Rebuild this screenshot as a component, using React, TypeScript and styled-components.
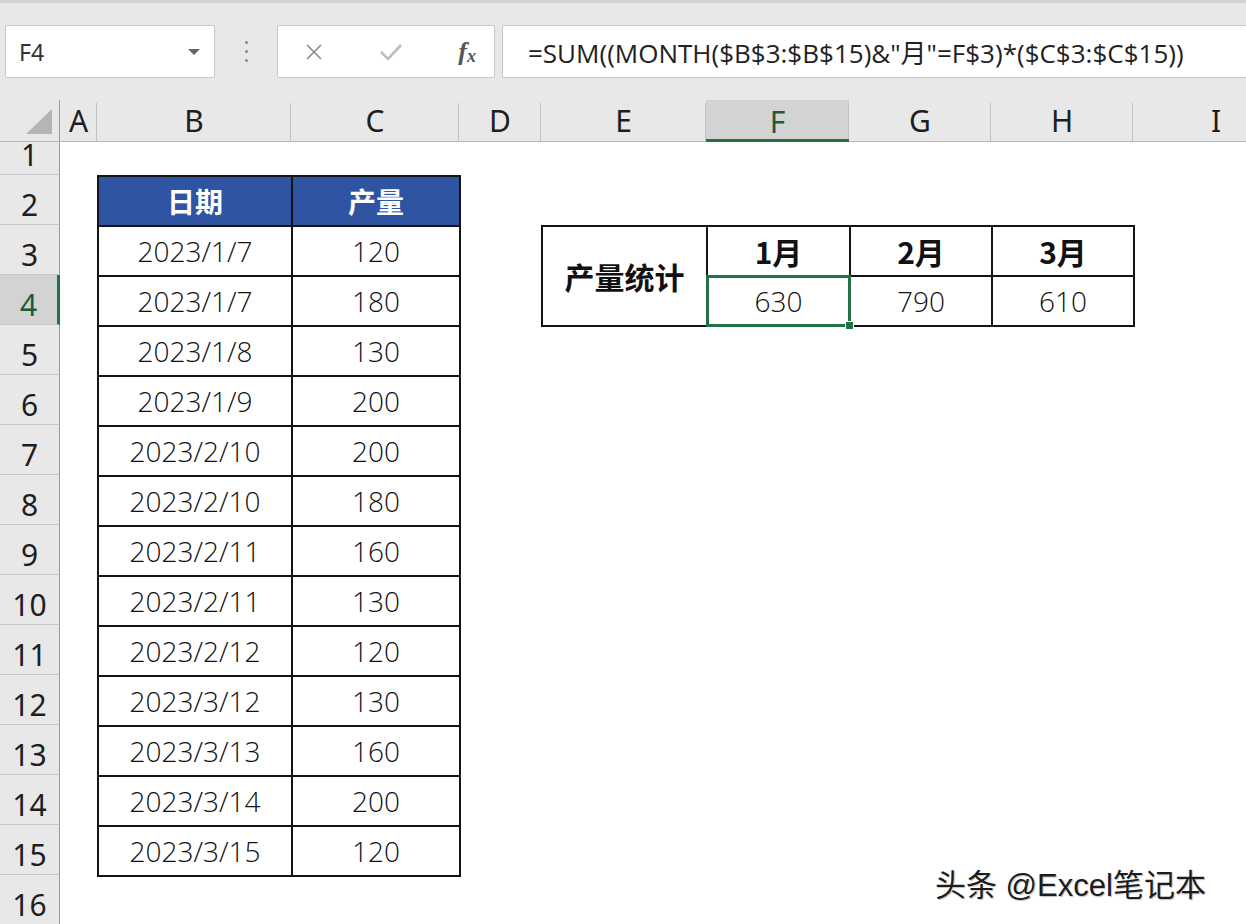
import React from 'react'
import styled, { createGlobalStyle } from 'styled-components'

const GlobalStyle = createGlobalStyle`
  html, body { margin: 0; padding: 0; background: #fff; }
  body {
    width: 1246px;
    height: 924px;
    overflow: hidden;
    font-family: "Noto Sans", "Noto Sans CJK SC", sans-serif;
    color: #222;
  }
`

const GREEN = '#217346'
const colWidths = [60, 37, 194, 168, 82, 165, 143, 142, 142, 166]
const colNames = ['A', 'B', 'C', 'D', 'E', 'F', 'G', 'H', 'I']

const records: [string, number][] = [
  ['2023/1/7', 120],
  ['2023/1/7', 180],
  ['2023/1/8', 130],
  ['2023/1/9', 200],
  ['2023/2/10', 200],
  ['2023/2/10', 180],
  ['2023/2/11', 160],
  ['2023/2/11', 130],
  ['2023/2/12', 120],
  ['2023/3/12', 130],
  ['2023/3/13', 160],
  ['2023/3/14', 200],
  ['2023/3/15', 120],
]

const App: React.FC = () => {
  return (
    <Page>
      <GlobalStyle />
      <Toolbar>
        <NameBox>
          <span>F4</span>
          <DropArrow />
        </NameBox>
        <Dots>
          <i /><i /><i />
        </Dots>
        <ButtonBox>
          <ToolIcon $tone="#8a8a8a">
            <svg width="20" height="20" viewBox="0 0 20 20">
              <path d="M3 3 L17 17 M17 3 L3 17" stroke="currentColor" strokeWidth="1.6" />
            </svg>
          </ToolIcon>
          <ToolIcon $tone="#bdbdbd">
            <svg width="24" height="20" viewBox="0 0 24 20">
              <path d="M2 10 L9 17 L22 3" stroke="currentColor" strokeWidth="2.6" fill="none" />
            </svg>
          </ToolIcon>
          <Fx>f<sub>x</sub></Fx>
        </ButtonBox>
        <FormulaBox>=SUM((MONTH($B$3:$B$15)&amp;"月"=F$3)*($C$3:$C$15))</FormulaBox>
      </Toolbar>

      <Sheet>
        <Corner>
          <svg width="26" height="25" viewBox="0 0 26 25">
            <polygon points="26,0 26,25 0,25" fill="#b5b5b5" />
          </svg>
        </Corner>
        {colNames.map((c, i) => (
          <ColHeader key={c} $selected={c === 'F'} style={{ gridColumn: i + 2 }}>
            {c}
          </ColHeader>
        ))}
        {Array.from({ length: 16 }, (_, i) => (
          <RowHeader key={i} $selected={i + 1 === 4} style={{ gridRow: i + 2 }}>
            {i + 1}
          </RowHeader>
        ))}

        <DataArea style={{ gridColumn: '3 / 5', gridRow: '3 / 17' }}>
          <Table>
            <colgroup>
              <col style={{ width: 194 }} />
              <col style={{ width: 168 }} />
            </colgroup>
            <thead>
              <tr>
                <HeadCell>日期</HeadCell>
                <HeadCell>产量</HeadCell>
              </tr>
            </thead>
            <tbody>
              {records.map(([d, v], i) => (
                <tr key={i}>
                  <Cell>{d}</Cell>
                  <Cell>{v}</Cell>
                </tr>
              ))}
            </tbody>
          </Table>
        </DataArea>

        <DataArea style={{ gridColumn: '6 / 10', gridRow: '4 / 6' }}>
          <Table>
            <colgroup>
              <col style={{ width: 165 }} />
              <col style={{ width: 143 }} />
              <col style={{ width: 142 }} />
              <col style={{ width: 142 }} />
            </colgroup>
            <tbody>
              <tr>
                <Cell rowSpan={2} $bold>产量统计</Cell>
                <Cell $bold>1月</Cell>
                <Cell $bold>2月</Cell>
                <Cell $bold>3月</Cell>
              </tr>
              <tr>
                <Cell>
                  630
                  <Selection><Handle /></Selection>
                </Cell>
                <Cell>790</Cell>
                <Cell>610</Cell>
              </tr>
            </tbody>
          </Table>
        </DataArea>

        <Watermark>头条 @Excel笔记本</Watermark>
      </Sheet>
    </Page>
  )
}
export default App

const Page = styled.div`
  width: 1246px;
  height: 924px;
  overflow: hidden;
  background: #fff;
`

const Toolbar = styled.div`
  height: 100px;
  box-sizing: border-box;
  background: #e8e8e8;
  border-top: 3px solid #d4d4d4;
  padding: 22px 0 0 5px;
  display: flex;
  align-items: flex-start;
`

const Box = styled.div`
  height: 53px;
  box-sizing: border-box;
  background: #fff;
  border: 1px solid #c8c8c8;
  border-radius: 2px;
  display: flex;
  align-items: center;
`

const NameBox = styled(Box)`
  width: 210px;
  padding: 0 14px 0 13px;
  justify-content: space-between;
  font-size: 23px;
  color: #333;
`

const DropArrow = styled.span`
  width: 0;
  height: 0;
  border-left: 6px solid transparent;
  border-right: 6px solid transparent;
  border-top: 6px solid #666;
`

const Dots = styled.div`
  width: 62px;
  height: 53px;
  display: flex;
  flex-direction: column;
  align-items: center;
  justify-content: center;
  gap: 6px;
  > i {
    width: 3px;
    height: 3px;
    border-radius: 50%;
    background: #888;
  }
`

const ButtonBox = styled(Box)`
  width: 218px;
  padding: 0 18px 0 26px;
  justify-content: space-between;
`

const ToolIcon = styled.span<{ $tone: string }>`
  color: ${p => p.$tone};
  display: flex;
  align-items: center;
`

const Fx = styled.span`
  font-family: "Liberation Serif", "DejaVu Serif", serif;
  font-style: italic;
  font-weight: bold;
  font-size: 26px;
  color: #555;
  > sub {
    font-size: 18px;
    vertical-align: -2px;
  }
`

const FormulaBox = styled(Box)`
  flex: 1;
  margin-left: 7px;
  border-right: none;
  border-radius: 2px 0 0 2px;
  padding-left: 25px;
  font-family: "Open Sans", "Noto Sans CJK SC", sans-serif;
  font-size: 26px;
  color: #222;
  white-space: nowrap;
`

const Sheet = styled.div`
  position: relative;
  display: grid;
  grid-template-columns: ${colWidths.map(w => `${w}px`).join(' ')};
  grid-template-rows: 42px 33px repeat(15, 50px);
  background: #fff;
`

const Corner = styled.div`
  grid-column: 1;
  grid-row: 1;
  background: #e8e8e8;
  border-right: 1px solid #9c9c9c;
  border-bottom: 1px solid #b8b8b8;
  display: flex;
  align-items: flex-end;
  justify-content: flex-end;
  padding: 0 7px 7px 0;
`

const ColHeader = styled.div<{ $selected?: boolean }>`
  grid-row: 1;
  position: relative;
  display: flex;
  align-items: center;
  justify-content: center;
  font-size: 30px;
  background: ${p => (p.$selected ? '#d3d3d3' : '#e8e8e8')};
  color: ${p => (p.$selected ? '#1d5a3c' : '#1e1e1e')};
  border-bottom: ${p => (p.$selected ? `3px solid ${GREEN}` : '1px solid #b8b8b8')};
  box-sizing: border-box;
  padding-top: ${p => (p.$selected ? '3px' : '0')};
  &::after {
    content: '';
    position: absolute;
    right: 0;
    top: 3px;
    bottom: 0;
    width: 1px;
    background: #c2c2c2;
  }
`

const RowHeader = styled.div<{ $selected?: boolean }>`
  grid-column: 1;
  display: flex;
  align-items: flex-end;
  justify-content: center;
  font-size: 30px;
  line-height: 30px;
  padding-bottom: 4px;
  box-sizing: border-box;
  background: ${p => (p.$selected ? '#d3d3d3' : '#e8e8e8')};
  color: ${p => (p.$selected ? '#1d5a3c' : '#1e1e1e')};
  border-bottom: 1px solid #c8c8c8;
  border-right: ${p => (p.$selected ? `3px solid ${GREEN}` : '1px solid #9c9c9c')};
`

const DataArea = styled.div`
  display: flex;
  align-items: flex-start;
`

const Table = styled.table`
  border-collapse: collapse;
  table-layout: fixed;
  width: 100%;
`

const HeadCell = styled.th`
  height: 48px;
  padding: 0;
  background: #2f55a2;
  color: #fff;
  font-size: 28px;
  font-weight: bold;
  border: 2px solid #151515;
  font-family: "Noto Sans CJK SC", sans-serif;
`

const Cell = styled.td<{ $bold?: boolean }>`
  position: relative;
  height: 48px;
  padding: 0;
  text-align: center;
  border: 2px solid #151515;
  font-size: ${p => (p.$bold ? '30px' : '28px')};
  font-weight: ${p => (p.$bold ? 700 : 300)};
  color: #111;
  font-family: ${p => (p.$bold ? '"Noto Sans CJK SC", sans-serif' : '"Open Sans", "Noto Sans CJK SC", sans-serif')};
`

const Selection = styled.span`
  position: absolute;
  left: -2px;
  top: -2px;
  right: -2px;
  bottom: -2px;
  border: 3px solid ${GREEN};
  pointer-events: none;
`

const Handle = styled.span`
  position: absolute;
  right: -6px;
  bottom: -6px;
  width: 7px;
  height: 7px;
  background: ${GREEN};
  border: 1px solid #fff;
`

const Watermark = styled.div`
  position: absolute;
  left: 935px;
  top: 760px;
  font-family: "Liberation Sans", "Noto Sans CJK SC", sans-serif;
  font-size: 31px;
  color: #1c1c1c;
  white-space: nowrap;
  text-shadow: -1px -1px 0 #fff, 1px 1px 1px rgba(0, 0, 0, 0.25);
`
